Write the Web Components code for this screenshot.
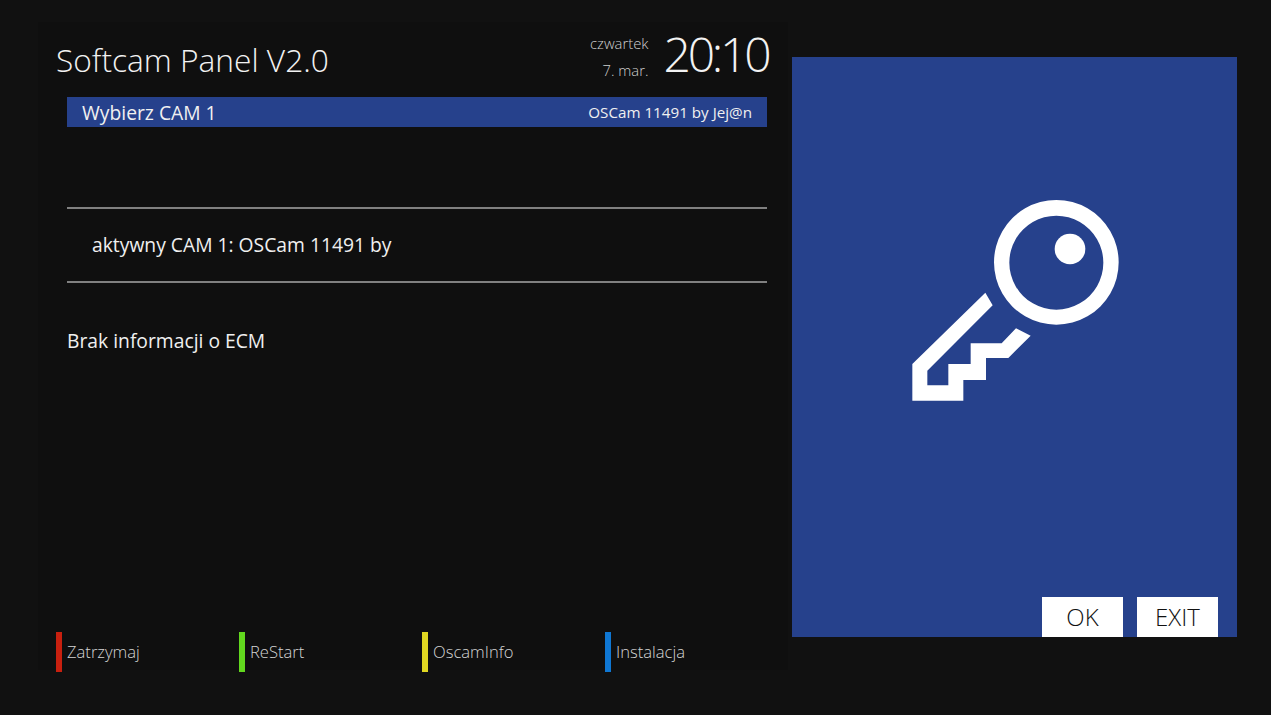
<!DOCTYPE html>
<html lang="pl">
<head>
<meta charset="utf-8">
<title>Softcam Panel</title>
<style>
  html, body { margin: 0; height: 100%; background: #111; }
  body { font-family: "Open Sans", "Liberation Sans", sans-serif; color: #fff; overflow: hidden; }
</style>
</head>
<body>
<softcam-screen>
  <softcam-header slot="main" title-text="Softcam Panel V2.0" day="czwartek" date="7. mar." time="20:10"></softcam-header>
  <cam-row slot="main" label="Wybierz CAM 1" value="OSCam 11491 by Jej@n"></cam-row>
  <cam-info slot="main" active="aktywny CAM 1: OSCam 11491 by" ecm="Brak informacji o ECM"></cam-info>
  <key-bar slot="main">
    <color-key color="#c8200f">Zatrzymaj</color-key>
    <color-key color="#62d81e">ReStart</color-key>
    <color-key color="#e0d722">OscamInfo</color-key>
    <color-key color="#0f77d3">Instalacja</color-key>
  </key-bar>
  <preview-pane slot="side">
    <white-button>OK</white-button>
    <white-button>EXIT</white-button>
  </preview-pane>
</softcam-screen>

<script>
class SoftcamScreen extends HTMLElement {
  constructor() {
    super();
    this.attachShadow({ mode: 'open' });
    this.shadowRoot.innerHTML = `
      <style>
        :host { display: flex; width: 1271px; height: 715px; box-sizing: border-box; padding: 22px 0 0 38px; }
        .main { width: 750px; height: 648px; background: #0f0f0f; display: flex; flex-direction: column; }
        .side { margin: 35px 0 0 4px; }
      </style>
      <div class="main"><slot name="main"></slot></div>
      <div class="side"><slot name="side"></slot></div>
    `;
  }
}

class SoftcamHeader extends HTMLElement {
  constructor() {
    super();
    this.attachShadow({ mode: 'open' });
  }

  connectedCallback() {
    this.shadowRoot.innerHTML = `
      <style>
        :host { display: flex; height: 75px; box-sizing: border-box; padding: 0 19.5px 0 18px; font-weight: 300; }
        .title { font-size: 31.7px; line-height: 44px; margin-top: 16px; color: #f2f2f2; flex: 1; }
        .date { font-size: 14.8px; line-height: 27px; text-align: right; color: #d0d0d0; margin-top: 8px; }
        .time { font-size: 48px; line-height: 64px; letter-spacing: -3.2px; margin: 0 0 0 15px; color: #f2f2f2; }
      </style>
      <div class="title">${this.getAttribute('title-text')}</div>
      <div class="date"><div>${this.getAttribute('day')}</div><div>${this.getAttribute('date')}</div></div>
      <div class="time">${this.getAttribute('time')}</div>
    `;
  }
}

class CamRow extends HTMLElement {
  constructor() {
    super();
    this.attachShadow({ mode: 'open' });
  }

  connectedCallback() {
    this.shadowRoot.innerHTML = `
      <style>
        :host { display: flex; align-items: center; justify-content: space-between; height: 30px; margin: 0 21px 0 29px; padding: 0 15px; background: #26418c; color: #f0f0f0; font-size: 19.3px; }
        .value { font-size: 15.2px; }
      </style>
      <span>${this.getAttribute('label')}</span>
      <span class="value">${this.getAttribute('value')}</span>
    `;
  }
}

class CamInfo extends HTMLElement {
  constructor() {
    super();
    this.attachShadow({ mode: 'open' });
  }

  connectedCallback() {
    this.shadowRoot.innerHTML = `
      <style>
        :host { display: block; flex: 1; margin: 80px 21px 0 29px; font-size: 19.3px; color: #f0f0f0; }
        .active { height: 72px; line-height: 72px; padding-left: 25px; border-top: 2px solid #808080; border-bottom: 2px solid #808080; }
        .ecm { margin-top: 44px; line-height: 28px; }
      </style>
      <div class="active">${this.getAttribute('active')}</div>
      <div class="ecm">${this.getAttribute('ecm')}</div>
    `;
  }
}

class KeyBar extends HTMLElement {
  constructor() {
    super();
    this.attachShadow({ mode: 'open' });
    this.shadowRoot.innerHTML = `
      <style>
        :host { display: grid; grid-template-columns: repeat(4, 183px); height: 40px; padding-left: 18px; margin-bottom: -2px; }
      </style>
      <slot></slot>
    `;
  }
}

class ColorKey extends HTMLElement {
  constructor() {
    super();
    this.attachShadow({ mode: 'open' });
  }

  connectedCallback() {
    this.shadowRoot.innerHTML = `
      <style>
        :host { display: flex; align-items: center; gap: 5px; font-size: 16.6px; font-weight: 300; color: #d4d4d4; }
        .bar { width: 6px; height: 40px; background: ${this.getAttribute('color')}; }
        .text { margin-top: -2px; }
      </style>
      <span class="bar"></span><span class="text"><slot></slot></span>
    `;
  }
}

class PreviewPane extends HTMLElement {
  constructor() {
    super();
    this.attachShadow({ mode: 'open' });
    this.shadowRoot.innerHTML = `
      <style>
        :host { display: flex; flex-direction: column; width: 445px; height: 580px; background: #26418c; }
        svg { display: block; margin: 123px 0 0 88px; }
        .buttons { display: flex; justify-content: flex-end; gap: 14px; margin-top: auto; padding-right: 19px; }
      </style>
      <svg width="260" height="240" viewBox="0 0 780 720" fill="#fff">
        <path fill-rule="evenodd" d="M529 60a187 187 0 1 0 0.01 0ZM529 107a141 141 0 1 1 -0.01 0Z"/>
        <circle cx="570" cy="207" r="46"/>
        <path d="M316 338L338 376L142 572V616H205V552H272V490H365L408 445L452 467L385 534H318V600H250V662H97V552Z"/>
      </svg>
      <div class="buttons"><slot></slot></div>
    `;
  }
}

class WhiteButton extends HTMLElement {
  constructor() {
    super();
    this.attachShadow({ mode: 'open' });
    this.shadowRoot.innerHTML = `
      <style>
        :host { display: flex; align-items: center; justify-content: center; box-sizing: border-box; width: 81px; height: 40px; padding-bottom: 2px; background: #fff; color: #111; font-size: 24px; font-weight: 300; }
      </style>
      <slot></slot>
    `;
  }
}

customElements.define('softcam-screen', SoftcamScreen);
customElements.define('softcam-header', SoftcamHeader);
customElements.define('cam-row', CamRow);
customElements.define('cam-info', CamInfo);
customElements.define('key-bar', KeyBar);
customElements.define('color-key', ColorKey);
customElements.define('preview-pane', PreviewPane);
customElements.define('white-button', WhiteButton);
</script>
</body>
</html>
